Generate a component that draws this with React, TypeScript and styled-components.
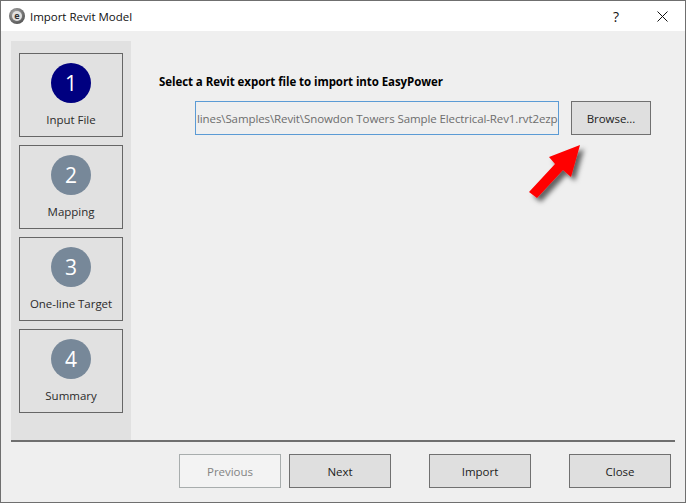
import React from "react";
import styled, { createGlobalStyle } from "styled-components";

const Global = createGlobalStyle`
  html, body { margin: 0; padding: 0; background: #efefef; }
  #root { width: 686px; height: 503px; }
  * { box-sizing: border-box; }
`;

const Win = styled.div`
  width: 686px;
  height: 503px;
  border: 1px solid #6f6f6f;
  background: #efefef;
  display: flex;
  flex-direction: column;
  font-family: "Open Sans", "Noto Sans", sans-serif;
  font-size: 11.5px;
  letter-spacing: -0.03px;
  color: #1a1a1a;
`;

const TitleBar = styled.div`
  height: 30px;
  background: #fff;
  display: flex;
  align-items: center;
  padding-left: 8px;
  flex: none;
`;

const AppIcon = styled.span`
  width: 16px;
  height: 16px;
  border-radius: 50%;
  background: radial-gradient(circle at 40% 35%, #b4b4b4, #555 75%);
  display: flex;
  align-items: center;
  justify-content: center;
  margin-right: 5px;
`;

const AppIconCore = styled.span`
  width: 10px;
  height: 10px;
  border-radius: 50%;
  background: #e0e0e0;
  color: #333;
  font-size: 9px;
  font-weight: 700;
  line-height: 9px;
  text-align: center;
`;

const Title = styled.span`
  flex: 1;
  color: #111;
`;

const WinBtn = styled.span`
  width: 46px;
  height: 30px;
  display: flex;
  align-items: center;
  justify-content: center;
  color: #111;
  font-size: 14px;
`;

const Main = styled.div`
  flex: 1;
  min-height: 0;
  display: flex;
  padding: 10px 10px 0 10px;
  position: relative;
`;

const Sidebar = styled.div`
  width: 120px;
  background: #e1e1e1;
  padding: 12px 8px 0 8px;
  display: flex;
  flex-direction: column;
  gap: 8px;
`;

const Step = styled.div`
  height: 84px;
  border: 1px solid #666;
  display: flex;
  flex-direction: column;
  align-items: center;
  padding-top: 9px;
`;

const Circle = styled.div<{ $active?: boolean }>`
  width: 40px;
  height: 40px;
  border-radius: 50%;
  background: ${(p) => (p.$active ? "#000080" : "#778899")};
  color: #fff;
  font-size: 21px;
  line-height: 40px;
  text-align: center;
`;

const StepLabel = styled.div`
  margin-top: 8px;
  line-height: 18px;
  color: #2b2b2b;
`;

const Content = styled.div`
  flex: 1;
  padding: 30px 24px 0 28px;
`;

const Heading = styled.div`
  font-weight: 700;
  line-height: 22px;
  letter-spacing: -0.07px;
  color: #000;
`;

const FileRow = styled.div`
  margin-top: 8px;
  margin-left: 36px;
  display: flex;
  gap: 12px;
`;

const PathBox = styled.div`
  width: 364px;
  height: 34px;
  border: 1px solid #5b9bd5;
  overflow: hidden;
  display: flex;
  align-items: center;
  padding-left: 1px;
  white-space: nowrap;
  letter-spacing: -0.1px;
  color: #6d6d6d;
`;

const Button = styled.div<{ $width?: number; $disabled?: boolean }>`
  width: ${(p) => p.$width ?? 102}px;
  height: 34px;
  flex: none;
  border: 1px solid ${(p) => (p.$disabled ? "#a8adad" : "#707070")};
  background: ${(p) => (p.$disabled ? "#f3f3f3" : "#dfdfdf")};
  color: ${(p) => (p.$disabled ? "#838383" : "#1c1c1c")};
  display: flex;
  align-items: center;
  justify-content: center;
`;

const Arrow = styled.svg`
  position: absolute;
  left: 519px;
  top: 100px;
  overflow: visible;
`;

const Divider = styled.div`
  flex: none;
  height: 2px;
  margin: 0 10px;
  background: #6f6f6f;
`;

const Footer = styled.div`
  flex: none;
  height: 60px;
  padding: 12px 14px 0 178px;
  display: flex;
`;

const NavGroup = styled.div`
  display: flex;
  gap: 8px;
  margin-right: 38px;
`;

const ActionGap = styled.div`
  width: 38px;
`;

export default function App() {
  const steps = ["Input File", "Mapping", "One-line Target", "Summary"];
  return (
    <Win>
      <Global />
      <TitleBar>
        <AppIcon><AppIconCore>e</AppIconCore></AppIcon>
        <Title>Import Revit Model</Title>
        <WinBtn>?</WinBtn>
        <WinBtn>
          <svg width="11" height="11" viewBox="0 0 11 11" fill="none" stroke="#111" strokeWidth="1">
            <path d="M0.5 0.5 L10.5 10.5 M10.5 0.5 L0.5 10.5" />
          </svg>
        </WinBtn>
      </TitleBar>
      <Main>
        <Sidebar>
          {steps.map((s, i) => (
            <Step key={s}>
              <Circle $active={i === 0}>{i + 1}</Circle>
              <StepLabel>{s}</StepLabel>
            </Step>
          ))}
        </Sidebar>
        <Content>
          <Heading>Select a Revit export file to import into EasyPower</Heading>
          <FileRow>
            <PathBox>lines\Samples\Revit\Snowdon Towers Sample Electrical-Rev1.rvt2ezp</PathBox>
            <Button $width={80}>Browse...</Button>
          </FileRow>
        </Content>
        <Arrow width="70" height="70" viewBox="0 0 70 70">
          <defs>
            <filter id="sh" x="-30%" y="-30%" width="170%" height="170%">
              <feDropShadow dx="4" dy="4" stdDeviation="2.5" floodColor="#000" floodOpacity="0.6" />
            </filter>
          </defs>
          <path d="M60 14 L51 46 L43 39 L17 67 L9 61 L35 33 L29 26 Z" fill="#ff0000" filter="url(#sh)" />
        </Arrow>
      </Main>
      <Divider />
      <Footer>
        <NavGroup>
          <Button $disabled>Previous</Button>
          <Button>Next</Button>
        </NavGroup>
        <Button>Import</Button>
        <ActionGap />
        <Button>Close</Button>
      </Footer>
    </Win>
  );
}
